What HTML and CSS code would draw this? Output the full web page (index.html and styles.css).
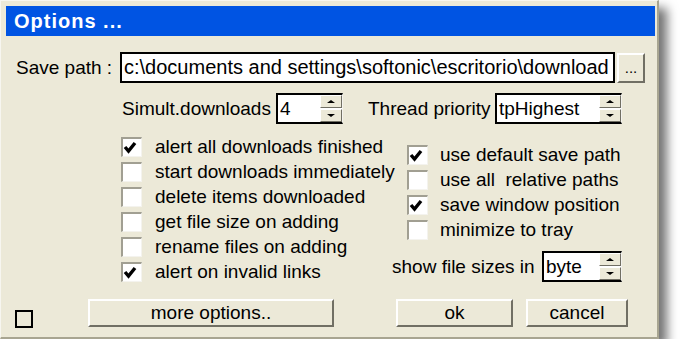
FILE: index.html
```html
<!DOCTYPE html>
<html lang="en">
<head>
    <meta charset="UTF-8">
    <title>Options ...</title>
    <link rel="stylesheet" href="styles.css">
</head>
<body>
    <div class="window">
        <div class="titlebar">Options ...</div>

        <div class="row path-row">
            <span class="label path-label">Save path :</span>
            <div class="edit path-edit">c:\documents and settings\softonic\escritorio\download</div>
            <button class="btn browse">...</button>
        </div>

        <div class="row spin-row">
            <span class="label simult-label">Simult.downloads</span>
            <div class="spin simult-spin">
                <div class="spin-text">4</div>
                <div class="spin-btns"><span class="up"></span><span class="down"></span></div>
            </div>
            <span class="label thread-label">Thread priority</span>
            <div class="spin thread-spin">
                <div class="spin-text">tpHighest</div>
                <div class="spin-btns"><span class="up"></span><span class="down"></span></div>
            </div>
        </div>

        <div class="options">
            <div class="col col-left">
                <div class="check"><span class="box on"></span>alert all downloads finished</div>
                <div class="check"><span class="box"></span>start downloads immediately</div>
                <div class="check"><span class="box"></span>delete items downloaded</div>
                <div class="check"><span class="box"></span>get file size on adding</div>
                <div class="check"><span class="box"></span>rename files on adding</div>
                <div class="check"><span class="box on"></span>alert on invalid links</div>
            </div>
            <div class="col col-right">
                <div class="check"><span class="box on"></span>use default save path</div>
                <div class="check"><span class="box"></span>use all&nbsp; relative paths</div>
                <div class="check"><span class="box on"></span>save window position</div>
                <div class="check"><span class="box"></span>minimize to tray</div>
                <div class="size-row">
                    <span class="label size-label">show file sizes in</span>
                    <div class="spin size-spin">
                        <div class="spin-text">byte</div>
                        <div class="spin-btns"><span class="up"></span><span class="down"></span></div>
                    </div>
                </div>
            </div>
        </div>

        <div class="row bottom-row">
            <span class="small-box"></span>
            <button class="btn more">more options..</button>
            <button class="btn ok">ok</button>
            <button class="btn cancel">cancel</button>
        </div>
    </div>
</body>
</html>
```

FILE: styles.css
```css
body {
    margin: 0;
    background: #fff;
    font-family: "Liberation Sans", Arial, sans-serif;
    font-size: 19px;
    color: #000;
}

.window {
    width: 659px;
    height: 339px;
    box-sizing: border-box;
    background: #ece9d8;
    border-left: 1px solid #f7f6f0;
    border-top: 1px solid #f7f6f0;
    border-right: 2px solid #a8a591;
    border-bottom: 2px solid #a8a591;
    box-shadow: 8px 8px 10px rgba(0,0,0,0.55);
}

.titlebar {
    margin: 5px 2px 0 5px;
    height: 30px;
    line-height: 30px;
    background: #0054e3;
    color: #fff;
    font-weight: bold;
    font-size: 20px;
    letter-spacing: 1px;
    padding-left: 8px;
}

.row {
    display: flex;
    align-items: center;
}

.label {
    white-space: nowrap;
}

/* save path */
.path-row {
    margin-top: 16px;
    padding-left: 15px;
}

.path-label {
    width: 104px;
}

.edit {
    box-sizing: border-box;
    height: 31px;
    border: 2px solid #000;
    background: #fff;
    padding-left: 2px;
    line-height: 27px;
    white-space: nowrap;
    overflow: hidden;
}

.path-edit {
    width: 495px;
    font-size: 20px;
}

.btn {
    box-sizing: border-box;
    height: 28px;
    padding: 0;
    background: #ece9d8;
    border: 2px solid;
    border-color: #fff #716f64 #716f64 #fff;
    font-family: inherit;
    font-size: 19px;
    color: #000;
}

.browse {
    width: 28px;
    height: 30px;
    margin-left: 2px;
    font-size: 15px;
}

/* spin edits */
.spin-row {
    margin-top: 10px;
    padding-left: 121px;
}

.simult-label {
    width: 154px;
}

.thread-label {
    width: 127px;
    margin-left: 25px;
}

.spin {
    display: flex;
    height: 31px;
    box-sizing: border-box;
    background: #fff;
    border: 2px solid #000;
    border-right: 1px solid #f4f3ee;
}

.spin-text {
    flex: 1;
    padding-left: 2px;
    line-height: 27px;
}

.spin-btns {
    width: 22px;
    display: flex;
    flex-direction: column;
    justify-content: center;
    gap: 1px;
}

.spin-btns span {
    position: relative;
    height: 13px;
    box-sizing: border-box;
    background: #ece9d8;
    border: 1px solid;
    border-color: #fff #716f64 #716f64 #fff;
}

.spin-btns span::after {
    content: "";
    position: absolute;
    left: 6px;
    top: 4px;
    border-left: 4px solid transparent;
    border-right: 4px solid transparent;
}

.spin-btns .up::after {
    border-bottom: 3px solid #000;
}

.spin-btns .down::after {
    border-top: 3px solid #000;
}

.simult-spin {
    width: 67px;
}

.thread-spin {
    width: 127px;
}

/* checkboxes */
.options {
    display: flex;
    margin-top: 10px;
    padding-left: 120px;
}

.col-left {
    width: 286px;
}

.col-right {
    padding-top: 8px;
}

.check {
    display: flex;
    align-items: center;
    height: 25px;
    white-space: nowrap;
}

.box {
    box-sizing: border-box;
    width: 21px;
    height: 20px;
    margin-right: 13px;
    background: #fff;
    border-left: 2px solid #a19f92;
    border-top: 2px solid #a19f92;
    border-right: 1px solid #f4f3ee;
    border-bottom: 1px solid #f4f3ee;
}

.col-right .box {
    margin-right: 12px;
}

.box.on {
    background: #fff url("data:image/svg+xml,%3Csvg xmlns='http://www.w3.org/2000/svg' width='18' height='17'%3E%3Cpath d='M2 8 L5.5 12 L12 4' fill='none' stroke='%23000' stroke-width='3.4'/%3E%3C/svg%3E") no-repeat;
}

.size-row {
    display: flex;
    align-items: center;
    margin-top: 9px;
    margin-left: -15px;
}

.size-label {
    width: 150px;
}

.size-spin {
    width: 80px;
}

/* bottom buttons */
.bottom-row {
    margin-top: 15px;
    padding-left: 14px;
    align-items: flex-start;
}

.small-box {
    box-sizing: border-box;
    width: 18px;
    height: 18px;
    margin-top: 11px;
    border: 2px solid #000;
}

.more {
    width: 246px;
    margin-left: 55px;
}

.ok {
    width: 117px;
    margin-left: 62px;
}

.cancel {
    width: 102px;
    margin-left: 13px;
}
```
